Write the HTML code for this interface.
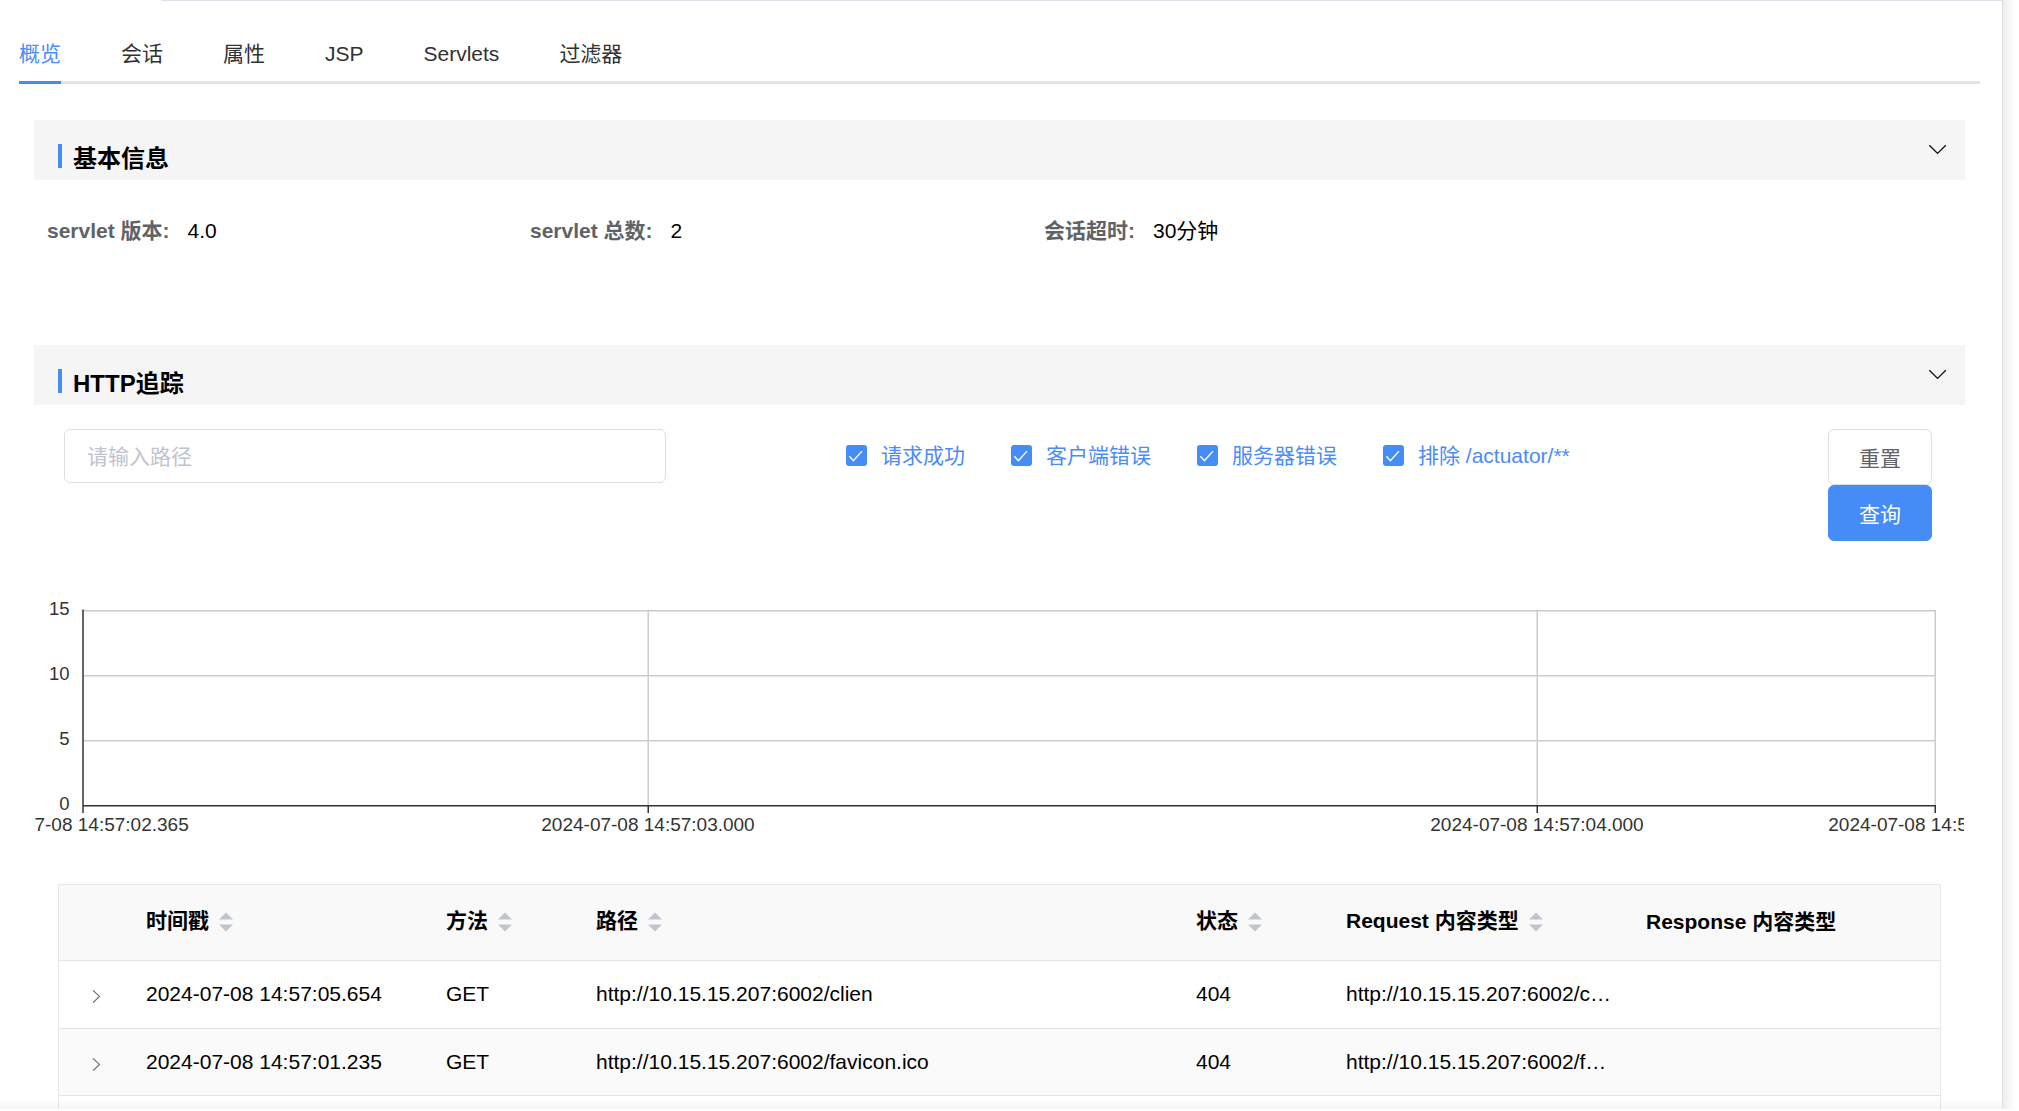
<!DOCTYPE html>
<html lang="zh-CN">
<head>
<meta charset="utf-8">
<title>概览</title>
<style>
*{box-sizing:border-box;margin:0;padding:0}
html,body{width:2019px;height:1111px;overflow:hidden;background:#fff}
body{font-family:"Liberation Sans","Noto Sans CJK SC",sans-serif;font-size:21px;color:#303133;position:relative}
.abs{position:absolute}
/* outer card */
.card-top{position:absolute;left:161px;top:0;width:1842px;height:1px;background:#dde1ea}
.card-right{position:absolute;left:2002px;top:0;width:1px;height:1109px;background:#dfe1e8}
.card-shadow{position:absolute;left:2003px;top:0;width:16px;height:1109px;background:linear-gradient(to right,#ededed 0,#f1f1f1 18%,#f8f8f8 40%,#fcfcfc 65%,#ffffff 100%)}
.bottom-shadow{position:absolute;left:0;top:1098px;width:2002px;height:11px;background:linear-gradient(to bottom,rgba(0,0,0,0),rgba(0,0,0,0.04));z-index:5}
/* tabs */
.tabs{position:absolute;left:19px;top:24px;width:1961px;height:60px}
.tabs .line{position:absolute;left:0;bottom:0;width:100%;height:3px;background:#e0e4ed}
.tabs .active-bar{position:absolute;left:0;bottom:0;width:42px;height:3px;background:#458cf6}
.tabs ul{list-style:none;display:flex;height:60px}
.tabs li{height:60px;line-height:60px;padding:0 30px;font-size:21px;color:#303133;white-space:nowrap}
.tabs li:first-child{padding-left:0;color:#4a8cf7}
/* section header */
.sec-head{position:absolute;left:34px;width:1931px;height:60px;background:#f5f5f5}
.sec-head .bar{position:absolute;left:24px;top:24px;width:4px;height:24px;background:#458cf6}
.sec-head h3{position:absolute;left:39px;top:21px;font-size:24px;line-height:36px;font-weight:bold;color:#000;white-space:nowrap}
.sec-head svg{position:absolute;left:1894px;top:24px}
/* info */
.info{position:absolute;top:216px;height:30px;line-height:30px;font-size:21px;white-space:nowrap}
.info b{color:#606266;font-weight:bold}
.info span{color:#000;margin-left:18px}
/* filter */
.path-input{position:absolute;left:64px;top:429px;width:602px;height:54px;border:1px solid #dcdfe6;border-radius:6px;background:#fff;padding:0 22px;line-height:54px;font-size:21px;color:#c0c4cc}
.cb{position:absolute;top:445px;height:22px;white-space:nowrap}
.cb i{position:absolute;left:0;top:0;width:21px;height:21px;border-radius:3px;background:#458cf6;display:block}
.cb i svg{position:absolute;left:0;top:0}
.cb span{position:absolute;left:35px;top:-4px;line-height:30px;font-size:21px;color:#4a8cf7}
.btn{position:absolute;left:1828px;width:104px;height:56px;border-radius:6px;font-size:21px;line-height:58px;text-align:center}
.btn.reset{top:429px;border:1px solid #dcdfe6;background:#fff;color:#606266}
.btn.query{top:485px;background:#458cf6;color:#fff;border:1px solid #458cf6}
/* chart */
.chart{position:absolute;left:34px;top:585px;width:1930px;height:270px;overflow:hidden}
/* table */
.tbl{position:absolute;left:58px;top:884px;width:1883px;height:230px;border:1px solid #e8e8e8;border-bottom:none;overflow:hidden;font-size:21px}
.tbl .row{position:absolute;left:0;width:1881px;border-bottom:1px solid #e1e6eb}
.tbl .row.head{top:0;height:76px;background:#f9f9f9;font-weight:bold;color:#000}
.tbl .row .c{position:absolute;top:0;height:100%;white-space:nowrap;overflow:hidden;color:#000}
.tbl .row.head .c{line-height:72px}
.tbl .row.body .c{line-height:66px}
.sort{display:inline-block;vertical-align:middle;margin-left:10px;position:relative;top:0px}
.exp{position:absolute;left:32.8px;top:28px}
</style>
</head>
<body>
<div class="card-top"></div>
<div class="card-right"></div>
<div class="card-shadow"></div>

<nav class="tabs">
  <div class="line"></div>
  <div class="active-bar"></div>
  <ul>
    <li>概览</li><li>会话</li><li>属性</li><li>JSP</li><li>Servlets</li><li>过滤器</li>
  </ul>
</nav>

<section class="sec-head" style="top:120px">
  <div class="bar"></div>
  <h3>基本信息</h3>
  <svg width="20" height="12" viewBox="0 0 20 12"><path d="M1.3 1.3 L9.55 9.4 L17.8 1.3" fill="none" stroke="#111" stroke-width="1.35"/></svg>
</section>

<div class="info" style="left:47px"><b>servlet 版本:</b><span>4.0</span></div>
<div class="info" style="left:530px"><b>servlet 总数:</b><span>2</span></div>
<div class="info" style="left:1044px"><b>会话超时:</b><span>30分钟</span></div>

<section class="sec-head" style="top:345px">
  <div class="bar"></div>
  <h3>HTTP追踪</h3>
  <svg width="20" height="12" viewBox="0 0 20 12"><path d="M1.3 1.3 L9.55 9.4 L17.8 1.3" fill="none" stroke="#111" stroke-width="1.35"/></svg>
</section>

<div class="path-input">请输入路径</div>

<label class="cb" style="left:846px"><i><svg width="21" height="21" viewBox="0 0 21 21"><path d="M3.4 11.3 L7.4 15.8 L16 6.1" fill="none" stroke="#fff" stroke-width="1.4"/></svg></i><span>请求成功</span></label>
<label class="cb" style="left:1011px"><i><svg width="21" height="21" viewBox="0 0 21 21"><path d="M3.4 11.3 L7.4 15.8 L16 6.1" fill="none" stroke="#fff" stroke-width="1.4"/></svg></i><span>客户端错误</span></label>
<label class="cb" style="left:1197px"><i><svg width="21" height="21" viewBox="0 0 21 21"><path d="M3.4 11.3 L7.4 15.8 L16 6.1" fill="none" stroke="#fff" stroke-width="1.4"/></svg></i><span>服务器错误</span></label>
<label class="cb" style="left:1383px"><i><svg width="21" height="21" viewBox="0 0 21 21"><path d="M3.4 11.3 L7.4 15.8 L16 6.1" fill="none" stroke="#fff" stroke-width="1.4"/></svg></i><span>排除 /actuator/**</span></label>

<div class="btn reset">重置</div>
<div class="btn query">查询</div>

<div class="chart">
<svg width="1930" height="270" viewBox="0 0 1930 270" font-family="'Liberation Sans','Noto Sans CJK SC',sans-serif" font-size="19" fill="#333">
  <g stroke="#cccccc" stroke-width="1.5" fill="none">
    <path d="M49 25.75H1901.5 M49 90.75H1901.5 M49 155.75H1901.5"/>
    <path d="M614.25 25V220 M1503.25 25V220 M1901.25 25V220"/>
  </g>
  <g stroke="#333" stroke-width="1.5" fill="none">
    <path d="M49 24.5V228 M48.25 220.75H1902 M614.25 220V228 M1503.25 220V228 M1901.25 220V228"/>
  </g>
  <g text-anchor="end" font-size="18.5">
    <text x="35.5" y="29.5">15</text>
    <text x="35.5" y="94.5">10</text>
    <text x="35.5" y="159.5">5</text>
    <text x="35.5" y="224.5">0</text>
  </g>
  <g text-anchor="middle">
    <text x="48" y="246">2024-07-08 14:57:02.365</text>
    <text x="614" y="246">2024-07-08 14:57:03.000</text>
    <text x="1503" y="246">2024-07-08 14:57:04.000</text>
    <text x="1901" y="246">2024-07-08 14:57:04.447</text>
  </g>
</svg>
</div>

<div class="tbl">
  <div class="row head">
    <div class="c" style="left:87px;width:300px">时间戳<svg class="sort" width="15" height="20" viewBox="0 0 15 20"><path d="M7 0.4 L14 7.5 H0 Z M7 19.6 L14 12.5 H0 Z" fill="#c0c4cc"/></svg></div>
    <div class="c" style="left:387px;width:150px">方法<svg class="sort" width="15" height="20" viewBox="0 0 15 20"><path d="M7 0.4 L14 7.5 H0 Z M7 19.6 L14 12.5 H0 Z" fill="#c0c4cc"/></svg></div>
    <div class="c" style="left:537px;width:600px">路径<svg class="sort" width="15" height="20" viewBox="0 0 15 20"><path d="M7 0.4 L14 7.5 H0 Z M7 19.6 L14 12.5 H0 Z" fill="#c0c4cc"/></svg></div>
    <div class="c" style="left:1137px;width:150px">状态<svg class="sort" width="15" height="20" viewBox="0 0 15 20"><path d="M7 0.4 L14 7.5 H0 Z M7 19.6 L14 12.5 H0 Z" fill="#c0c4cc"/></svg></div>
    <div class="c" style="left:1287px;width:300px">Request 内容类型<svg class="sort" width="15" height="20" viewBox="0 0 15 20"><path d="M7 0.4 L14 7.5 H0 Z M7 19.6 L14 12.5 H0 Z" fill="#c0c4cc"/></svg></div>
    <div class="c" style="left:1587px;width:290px;padding-top:1px">Response 内容类型</div>
  </div>
  <div class="row body" style="top:76px;height:68px;background:#fff">
    <svg class="exp" width="12" height="20" viewBox="0 0 12 20"><path d="M1 1.3 L7.5 7.4 L1 13.6" fill="none" stroke="#606266" stroke-width="1.05"/></svg>
    <div class="c" style="left:87px;width:300px">2024-07-08 14:57:05.654</div>
    <div class="c" style="left:387px;width:150px">GET</div>
    <div class="c" style="left:537px;width:600px">http://10.15.15.207:6002/clien</div>
    <div class="c" style="left:1137px;width:150px">404</div>
    <div class="c" style="left:1287px;width:270px">http://10.15.15.207:6002/c…</div>
  </div>
  <div class="row body" style="top:144px;height:67px;background:#fafafa">
    <svg class="exp" width="12" height="20" viewBox="0 0 12 20"><path d="M1 1.3 L7.5 7.4 L1 13.6" fill="none" stroke="#606266" stroke-width="1.05"/></svg>
    <div class="c" style="left:87px;width:300px">2024-07-08 14:57:01.235</div>
    <div class="c" style="left:387px;width:150px">GET</div>
    <div class="c" style="left:537px;width:600px">http://10.15.15.207:6002/favicon.ico</div>
    <div class="c" style="left:1137px;width:150px">404</div>
    <div class="c" style="left:1287px;width:270px">http://10.15.15.207:6002/f…</div>
  </div>
</div>
<div class="bottom-shadow"></div>
<div class="abs" style="left:0;top:1109px;width:2019px;height:2px;background:#fff;z-index:6"></div>
</body>
</html>
